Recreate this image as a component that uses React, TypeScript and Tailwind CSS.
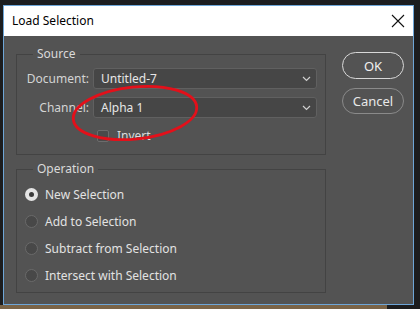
import React from "react";

function Chevron() {
  return (
    <svg width="9" height="6" viewBox="0 0 9 6" className="shrink-0">
      <path d="M1 1 L4.5 4.5 L8 1" fill="none" stroke="#d0d0d0" strokeWidth="1.2" />
    </svg>
  );
}

function Select({ value }: { value: string }) {
  return (
    <div className="flex h-[21px] w-[224px] items-center justify-between rounded-[3px] border border-[#606060] bg-[#464646] pl-[7px] pr-[5px] text-[#e6e6e6]">
      <span>{value}</span>
      <Chevron />
    </div>
  );
}

function Radio({ checked, label }: { checked?: boolean; label: string }) {
  return (
    <div className="flex h-[27px] items-center">
      <div className="ml-[8px] mr-[7px] flex h-[13px] w-[13px] items-center justify-center">
        {checked ? (
          <div className="flex h-[13px] w-[13px] items-center justify-center rounded-full bg-[#e4e4e4]">
            <div className="h-[5px] w-[5px] rounded-full bg-[#3a3a3a]" />
          </div>
        ) : (
          <div className="h-[13px] w-[13px] rounded-full border border-[#6a6a6a] bg-[#484848]" />
        )}
      </div>
      <span className="text-[#e2e2e2]">{label}</span>
    </div>
  );
}

export default function App() {
  return (
    <div
      className="flex h-[309px] w-[420px] flex-col bg-[#1c1d1f] pt-[5px] text-[12px] leading-[16px]"
      style={{ fontFamily: '"Noto Sans", "Open Sans", sans-serif' }}
    >
      <div className="relative ml-[3px] flex h-[300px] w-[411px] flex-col border border-[#6ea6d8] bg-[#535353]">
        <div className="flex h-[30px] shrink-0 items-center justify-between bg-white pl-[8px] pr-[8px] text-[12px] text-black">
          <span>Load Selection</span>
          <svg width="14" height="14" viewBox="0 0 14 14">
            <path d="M1 1 L13 13 M13 1 L1 13" stroke="#111" strokeWidth="1.1" />
          </svg>
        </div>
        <div className="flex flex-1 pl-[12px] pt-[10px]">
          <div className="flex w-[310px] flex-col">
            <fieldset className="border border-[#434343] pb-[10px]">
              <legend className="ml-[16px] px-[4px] text-[#dadada]">Source</legend>
              <div className="mt-[6px] flex items-center">
                <span className="w-[72px] text-right text-[#d4d4d4]">Document:</span>
                <div className="ml-[4px]">
                  <Select value="Untitled-7" />
                </div>
              </div>
              <div className="mt-[8px] flex items-center">
                <span className="w-[72px] text-right text-[#d4d4d4]">Channel:</span>
                <div className="ml-[4px]">
                  <Select value="Alpha 1" />
                </div>
              </div>
              <div className="mt-[10px] flex items-center pl-[80px]">
                <div className="h-[12px] w-[12px] rounded-[2px] border border-[#6c6c6c] bg-[#4a4a4a]" />
                <span className="ml-[8px] text-[#dcdcdc]">Invert</span>
              </div>
            </fieldset>
            <fieldset className="mt-[6px] border border-[#434343] pb-[3px]">
              <legend className="ml-[16px] px-[4px] text-[#dadada]">Operation</legend>
              <div className="mt-[4px]">
                <Radio checked label="New Selection" />
                <Radio label="Add to Selection" />
                <Radio label="Subtract from Selection" />
                <Radio label="Intersect with Selection" />
              </div>
            </fieldset>
          </div>
          <div className="ml-[16px] flex flex-col pt-[6px]">
            <button className="flex h-[27px] w-[62px] items-center justify-center rounded-full border border-[#d8d8d8] text-[13px] text-[#f0f0f0]">
              OK
            </button>
            <button className="mt-[9px] flex h-[26px] w-[62px] items-center justify-center rounded-full border border-[#8a8a8a] text-[13px] text-[#e8e8e8]">
              Cancel
            </button>
          </div>
        </div>
        <svg
          className="pointer-events-none absolute left-0 top-0"
          width="411"
          height="300"
          viewBox="0 0 411 300"
        >
          <ellipse
            cx="131"
            cy="107"
            rx="62"
            ry="26"
            transform="rotate(-6 131 107)"
            fill="none"
            stroke="#e3101a"
            strokeWidth="2.8"
          />
        </svg>
      </div>
      <div className="flex h-[4px]">
        <div className="w-[387px] bg-[#7a6448]" />
        <div className="flex-1 bg-[#1c1d1f]" />
      </div>
    </div>
  );
}
